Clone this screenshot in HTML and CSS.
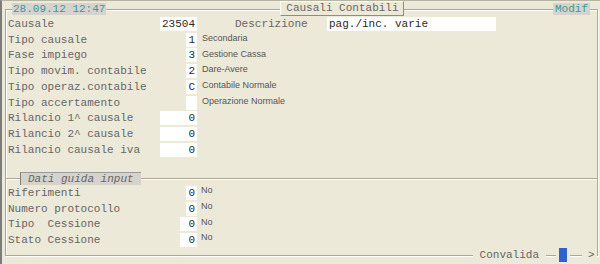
FILE: index.html
```html
<!DOCTYPE html>
<html>
<head>
<meta charset="utf-8">
<link rel="stylesheet" href="styles.css">
</head>
<body>
<div class="win">
  <div class="head">
    <span class="badge date">28.09.12 12:47</span>
    <span class="title">Causali Contabili</span>
    <span class="badge modif">Modif</span>
  </div>
  <div class="frame">
    <div class="form">
      <span class="lbl">Causale</span>
      <span class="box wide">23504</span>
      <span class="desc-field"><span class="lbl">Descrizione</span><span class="box text">pag./inc. varie</span></span>

      <span class="lbl">Tipo causale</span>
      <span class="box one">1</span>
      <span class="desc">Secondaria</span>

      <span class="lbl">Fase impiego</span>
      <span class="box one">3</span>
      <span class="desc">Gestione Cassa</span>

      <span class="lbl">Tipo movim. contabile</span>
      <span class="box one">2</span>
      <span class="desc">Dare-Avere</span>

      <span class="lbl">Tipo operaz.contabile</span>
      <span class="box one">C</span>
      <span class="desc">Contabile Normale</span>

      <span class="lbl">Tipo accertamento</span>
      <span class="box one"></span>
      <span class="desc">Operazione Normale</span>

      <span class="lbl">Rilancio 1^ causale</span>
      <span class="box wide">0</span>
      <span></span>

      <span class="lbl">Rilancio 2^ causale</span>
      <span class="box wide">0</span>
      <span></span>

      <span class="lbl">Rilancio causale iva</span>
      <span class="box wide">0</span>
      <span></span>
    </div>

    <div class="divider"><span class="section">Dati guida input</span></div>

    <div class="form">
      <span class="lbl">Riferimenti</span>
      <span class="box one">0</span>
      <span class="no">No</span>

      <span class="lbl">Numero protocollo</span>
      <span class="box one">0</span>
      <span class="no">No</span>

      <span class="lbl">Tipo&nbsp; Cessione</span>
      <span class="box two">0</span>
      <span class="no">No</span>

      <span class="lbl">Stato Cessione</span>
      <span class="box two">0</span>
      <span class="no">No</span>
    </div>

    <div class="footer">
      <span class="conv">Convalida</span>
      <span class="sq"></span>
      <span class="arrow">&gt;</span>
    </div>
  </div>
</div>
</body>
</html>
```

FILE: styles.css
```css
* { box-sizing: border-box; }
html, body { margin: 0; padding: 0; }
body {
  background: #ece9d8;
  font-family: "Liberation Mono", "DejaVu Sans Mono", monospace;
  font-size: 11px;
  color: #666;
  width: 600px;
  height: 264px;
  overflow: hidden;
}
.win {
  height: 264px;
  border-left: 2px solid #7c7c7c;
  border-top: 1px solid #b8b4a4;
  display: flex;
  flex-direction: column;
}
.head {
  height: 15px;
  display: flex;
  align-items: flex-start;
  padding-left: 10px;
  position: relative;
  z-index: 1;
}
.badge {
  margin-top: 2px;
  height: 12px;
  line-height: 12px;
  background: #d6d3cc;
  color: #3a9a9a;
  padding: 0 1px;
}
.title {
  margin-left: 174px;
  width: 124px;
  height: 15px;
  line-height: 13px;
  text-align: center;
  background: #ece9d8;
  border-top: 1px solid #fff;
  border-left: 1px solid #fff;
  border-right: 1px solid #8c8c8c;
  border-bottom: 1px solid #8c8c8c;
  color: #666;
}
.modif {
  margin-left: auto;
  margin-right: 10px;
  padding: 0 2px;
}
.frame {
  margin: -7px 2px 0 3px;
  height: 247px;
  border: 1px solid #aca899;
  box-shadow: inset 1px 1px 0 #fff, 1px 1px 0 #fff;
  padding: 6px 0 0 2px;
  display: flex;
  flex-direction: column;
}
.form {
  display: grid;
  grid-template-columns: 152px 37px 1fr;
  grid-auto-rows: 15.75px;
  align-items: center;
}
.lbl { white-space: pre; line-height: 14px; }
.box {
  height: 14px;
  line-height: 14px;
  background: #fff;
  color: #2a2a2a;
  text-align: right;
  justify-self: end;
  white-space: pre;
}
.box.wide { width: 37px; padding-right: 2px; }
.box.one { width: 11px; padding-right: 2px; }
.box.two { width: 17px; padding-right: 2px; }
.box.text { width: 169px; text-align: left; padding-left: 2px; }
.desc-field {
  display: flex;
  align-items: center;
  margin-left: 38px;
}
.desc-field .lbl { width: 92px; }
.desc, .no {
  font-family: "Liberation Sans", Arial, sans-serif;
  font-size: 9px;
  color: #555;
  margin-left: 5px;
  align-self: start;
  line-height: 12px;
}
.no { margin-left: 4px; line-height: 10px; }
.divider {
  height: 27.25px;
  margin-left: -2px;
  display: flex;
  align-items: flex-end;
  background: linear-gradient(to bottom, transparent 20px, #aca899 20px, #aca899 21px, #fff 21px, #fff 22px, transparent 22px);
}
.section {
  margin-left: 14px;
  width: 121px;
  height: 13px;
  line-height: 12px;
  padding-left: 7px;
  font-style: italic;
  background: #d6d3cc;
  border-left: 1px solid #808080;
  border-top: 1px solid #9a9a9a;
  color: #666;
}
.footer {
  margin-top: auto;
  margin-bottom: -7px;
  height: 14px;
  display: flex;
  justify-content: flex-end;
  align-items: center;
}
.conv {
  background: #ece9d8;
  padding: 0 7px;
  line-height: 14px;
  margin-right: 10px;
}
.sq {
  width: 14px;
  height: 14px;
  background: #2f62cc;
  border-left: 3px solid #ece9d8;
  border-right: 3px solid #ece9d8;
  margin-right: 12px;
}
.arrow {
  width: 15px;
  padding-left: 6px;
  line-height: 14px;
  background: #ece9d8;
}
```
